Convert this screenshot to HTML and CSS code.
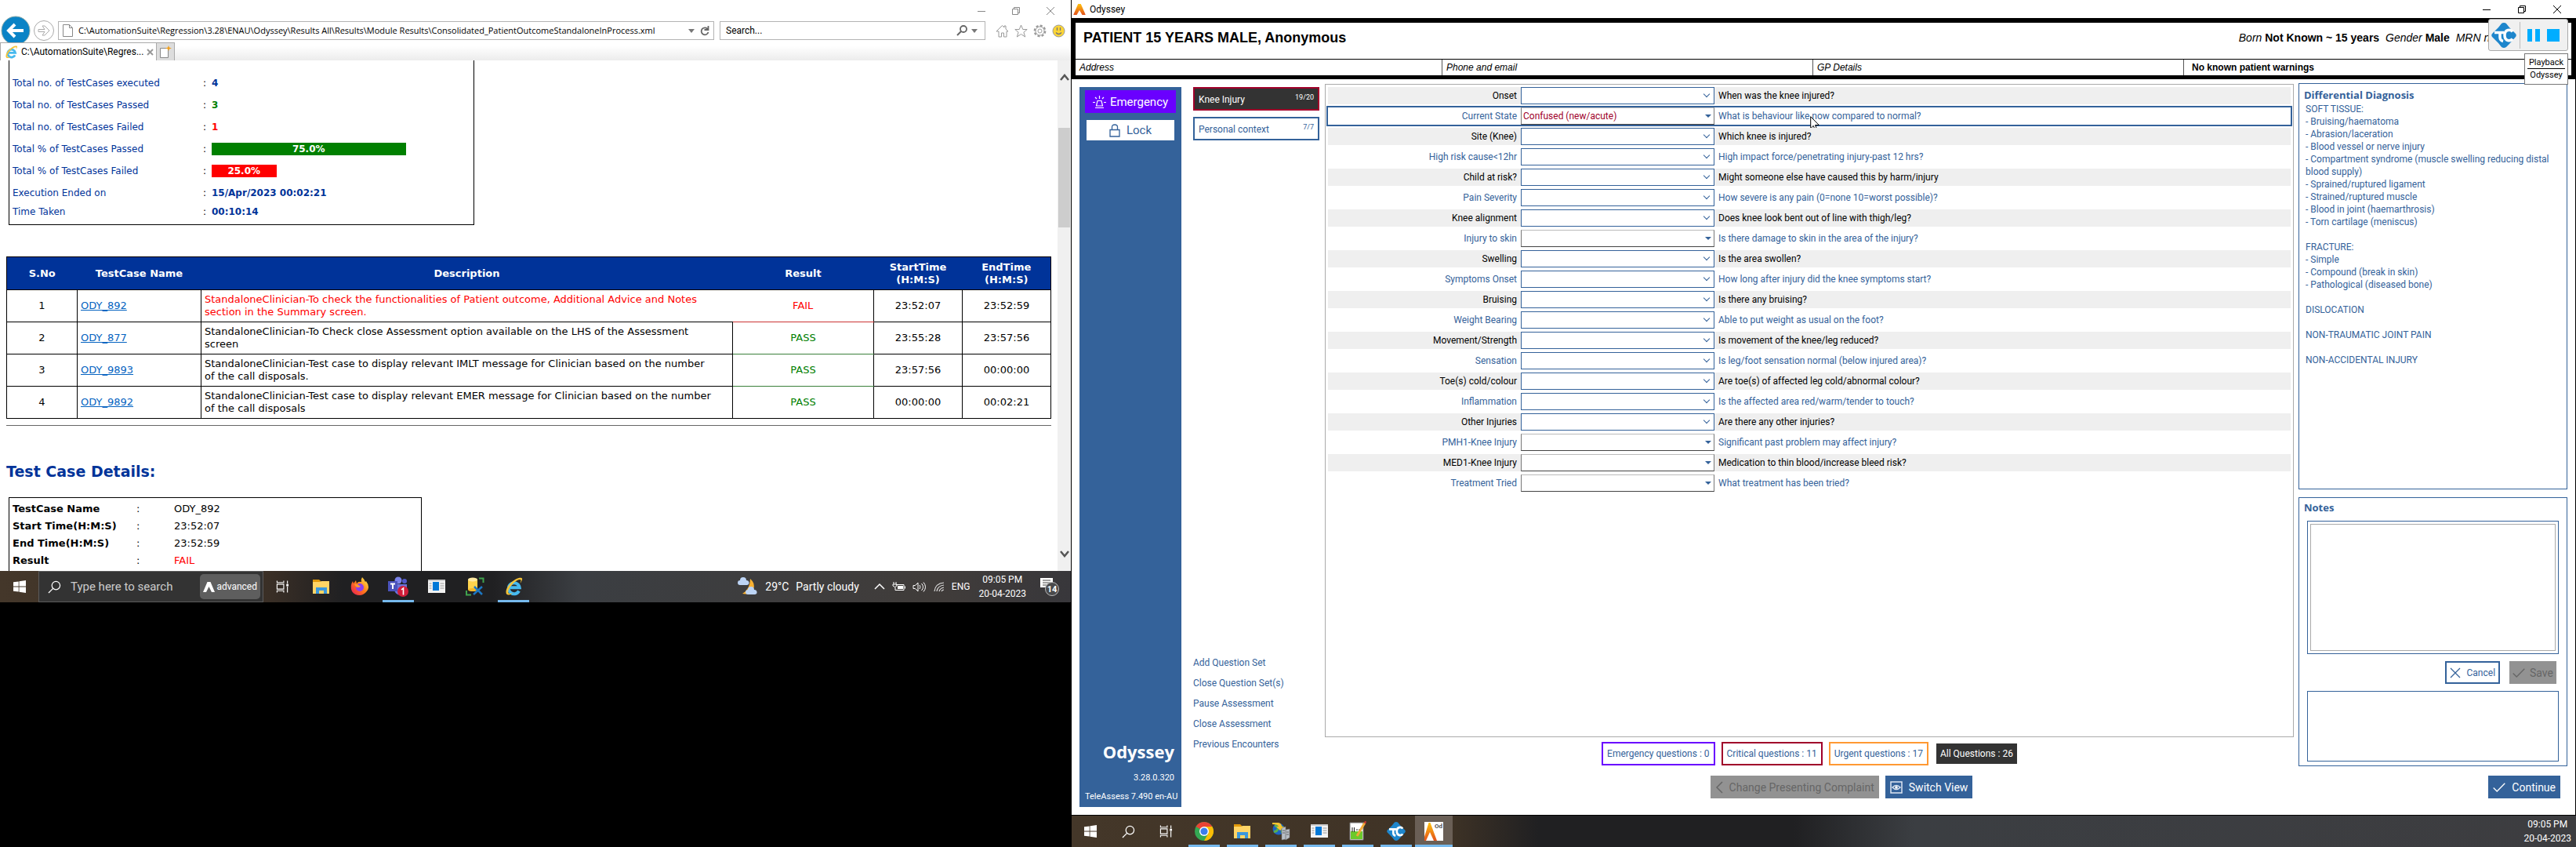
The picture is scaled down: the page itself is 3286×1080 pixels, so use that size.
FILE: index.html
```html
<!DOCTYPE html>
<html lang="en">
<head>
<meta charset="utf-8">
<title>Odyssey</title>
<link rel="stylesheet" href="styles.css">
</head>
<body>
<svg class="defs" aria-hidden="true">
  <symbol id="i-min" viewBox="0 0 12 12"><path d="M1 6.500h10" stroke="currentColor" fill="none"/></symbol>
  <symbol id="i-restore" viewBox="0 0 12 12"><path d="M1.500 3.500h7v7h-7zM3.500 3.500v-2h7v7h-2" stroke="currentColor" fill="none"/></symbol>
  <symbol id="i-close" viewBox="0 0 12 12"><path d="M1 1l10 10M11 1L1 11" stroke="currentColor" fill="none"/></symbol>
  <symbol id="i-windows" viewBox="0 0 16 16"><path d="M0 2.300L6.700 1.400v6.200H0zM7.500 1.300L16 0v7.600H7.500zM0 8.400h6.700v6.200L0 13.700zM7.500 8.400H16V16l-8.500-1.300z" fill="#fff"/></symbol>
  <symbol id="i-search" viewBox="0 0 18 18"><circle cx="11" cy="7" r="5.500" fill="none" stroke="#fff" stroke-width="1.300"/><path d="M7 11L1 17" stroke="#fff" stroke-width="1.300"/></symbol>
  <symbol id="i-taskview" viewBox="0 0 18 16"><path d="M1.500 0v2.500h9V0M1.500 16v-2.500h9V16M1.500 4.700h9v6.600h-9zM15.500 0v4M15.500 8v8" fill="none" stroke="#fff" stroke-width="1.200"/><path d="M14 4.500h3v3h-3z" fill="#fff"/></symbol>
  <symbol id="i-folder" viewBox="0 0 24 20"><path d="M1 1h8l2 2v4H1z" fill="#e19a0b"/><path d="M1 4h9l2-1h10v16H1z" fill="#ffd566"/><path d="M5 19v-8h14v8h-4v-4H9v4z" fill="#3b98dc"/></symbol>
  <symbol id="i-window" viewBox="0 0 22 18"><path d="M0 0h22v17H0z" fill="#f3f3f3"/><path d="M0 0h22v2H0z" fill="#ccc"/><path d="M6 3h8v11H6z" fill="#0078d7"/><path d="M1.500 5h3M1.500 8h3M1.500 11h3M15.500 5h5M15.500 8h5M15.500 11h5" stroke="#999"/></symbol>
  <symbol id="i-tc" viewBox="0 0 32 32"><path d="M16 0q2 0 3 1l4 5 8 8q1.500 2 0 4l-8 9-4 4q-3 2-6 0l-4-5-8-8q-1.500-2 0-4l8-8 4-5q1-1 3-1z" fill="#1e86cc"/><path d="M4 12.500h12M11 12.500v6q0 4 4 5M27 11.500q-2-3-6-2-4 1-4 6.500t4 6.500q4 1 6-2" fill="none" stroke="#fff" stroke-width="3.500"/></symbol>
  <symbol id="i-a" viewBox="0 0 18 16"><linearGradient id="g-a" x1="0" y1="0" x2="0" y2="1"><stop offset="0" stop-color="#ffc20e"/><stop offset="1" stop-color="#e2501c"/></linearGradient><path d="M7 0h4l7 16h-5L9 9l-4 7H0z" fill="url(#g-a)"/></symbol>
  <symbol id="i-ie" viewBox="0 0 24 24"><path d="M18.500 17.500a7 7 0 1 1 .7-4.300H7" fill="none" stroke="#46b9ee" stroke-width="4"/><path d="M22 1C15-1 2 11 2 19c0 6 7 3 9 1-5 2-7 1-6-3C7 11 15 3 20 3q2 0 0 5 4-6 2-7z" fill="#f6c338"/></symbol>
  <symbol id="i-check" viewBox="0 0 16 12"><path d="M.7 6.500l4.500 4.500L15.300.7" fill="none" stroke="currentColor" stroke-width="1.300"/></symbol>
</svg>

<main class="desktop">
<section class="screen screen-left">
  <div class="browser">
    <div class="titlebar browser-title">
      <button aria-label="Minimize"><svg width="12" height="12"><use href="#i-min"/></svg></button>
      <button aria-label="Restore"><svg width="12" height="12"><use href="#i-restore"/></svg></button>
      <button aria-label="Close"><svg width="12" height="12"><use href="#i-close"/></svg></button>
    </div>
    <nav class="navbar">
      <button class="back" aria-label="Back"><svg width="38" height="38" viewBox="0 0 38 38"><circle cx="19" cy="19" r="18" fill="#0a83c6" stroke="#8aa" stroke-width="1"/><path d="M29 19H11M18 11l-8 8 8 8" fill="none" stroke="#fff" stroke-width="4"/></svg></button>
      <button aria-label="Forward"><svg width="28" height="28" viewBox="0 0 28 28"><circle cx="14" cy="14" r="12.500" fill="none" stroke="#aaa"/><path d="M7 12.500h8L12 8h3l6 6-6 6h-3l3-4.500H7z" fill="none" stroke="#aaa"/></svg></button>
      <div class="field address"><svg width="13" height="16" viewBox="0 0 13 16"><path d="M.5.500h8l4 4v11H.5zM8.500.500v4h4" fill="#fff" stroke="#888"/></svg><input aria-label="Address" value="C:\AutomationSuite\Regression\3.28\ENAU\Odyssey\Results All\Results\Module Results\Consolidated_PatientOutcomeStandaloneInProcess.xml"><svg width="8" height="5"><path d="M0 0h8L4 5z" fill="#777"/></svg><svg width="12" height="13" viewBox="0 0 12 13"><path d="M10 4.500A4.500 4.500 0 1 0 10.500 8M10.500 0v5h-5" fill="none" stroke="#666" stroke-width="1.800"/></svg></div>
      <div class="field search"><input aria-label="Search" value="Search..."><svg width="14" height="14" viewBox="0 0 14 14"><circle cx="9" cy="5" r="4" fill="none" stroke="#666" stroke-width="1.800"/><path d="M6 8l-5 5" stroke="#666" stroke-width="2"/></svg><svg width="8" height="5"><path d="M0 0h8L4 5z" fill="#777"/></svg></div>
      <div class="tools">
        <button aria-label="Home"><svg width="17" height="17" viewBox="0 0 17 17"><path d="M1 9L8.500 1.500 11 4V2h2v4l3 3h-2v7h-3.500v-5h-3v5H4V9z" fill="none" stroke="#999"/></svg></button>
        <button aria-label="Favorites"><svg width="17" height="17" viewBox="0 0 17 17"><path d="M8.500 1l2.300 5.500h5.400l-4.300 3.700 1.800 5.800-5.200-3.500L3.300 16l1.800-5.800L.8 6.500h5.400z" fill="none" stroke="#999"/></svg></button>
        <button aria-label="Tools"><svg width="17" height="17" viewBox="0 0 17 17"><circle cx="8.500" cy="8.500" r="6.700" fill="none" stroke="#999" stroke-width="2.400" stroke-dasharray="3 2.260"/><circle cx="8.500" cy="8.500" r="5.500" fill="#fff" stroke="#999"/><circle cx="8.500" cy="8.500" r="2.500" fill="none" stroke="#999"/></svg></button>
        <button aria-label="Feedback"><svg width="17" height="17" viewBox="0 0 17 17"><circle cx="8.500" cy="8.500" r="7.500" fill="#fcd535" stroke="#999"/><path d="M6.500 4v4M10.500 4v4M5 10.500q3.500 4 7 0" fill="none" stroke="#777" stroke-width="1.300"/></svg></button>
      </div>
    </nav>
    <div class="tabs">
      <div class="tab"><svg width="17" height="17"><use href="#i-ie"/></svg><span>C:\AutomationSuite\Regres...</span><button aria-label="Close tab"><svg width="9" height="9" viewBox="0 0 9 9"><path d="M1 1l7 7M8 1L1 8" stroke="#999" stroke-width="2"/></svg></button></div>
      <button class="newtab" aria-label="New tab"><svg width="15" height="17" viewBox="0 0 15 17"><path d="M.5 3.500h10v12H.5z" fill="#fff" stroke="#888"/><path d="M11 0l1 2.500 3 1-3 1-1 2.500-1-2.500-3-1 3-1z" fill="#f0a020"/></svg></button>
    </div>
    <div class="viewport">
      <div class="report">
        <dl class="summary">
          <div><dt>Total no. of TestCases executed</dt><dd>4</dd></div>
          <div><dt>Total no. of TestCases Passed</dt><dd class="pass">3</dd></div>
          <div><dt>Total no. of TestCases Failed</dt><dd class="fail">1</dd></div>
          <div><dt>Total % of TestCases Passed</dt><dd><span class="bar bar-pass" style="width:75%">75.0%</span></dd></div>
          <div><dt>Total % of TestCases Failed</dt><dd><span class="bar bar-fail" style="width:25%">25.0%</span></dd></div>
          <div><dt>Execution Ended on</dt><dd>15/Apr/2023 00:02:21</dd></div>
          <div class="tight"><dt>Time Taken</dt><dd>00:10:14</dd></div>
        </dl>
        <table class="cases">
          <colgroup><col class="c-no"><col class="c-name"><col><col class="c-result"><col class="c-time"><col class="c-time"></colgroup>
          <thead><tr><th>S.No</th><th>TestCase Name</th><th>Description</th><th>Result</th><th>StartTime<br>(H:M:S)</th><th>EndTime<br>(H:M:S)</th></tr></thead>
          <tbody>
            <tr class="failed"><td>1</td><td><a href="#ody892">ODY_892</a></td><td>StandaloneClinician-To check the functionalities of Patient outcome, Additional Advice and Notes<br>section in the Summary screen.</td><td>FAIL</td><td>23:52:07</td><td>23:52:59</td></tr>
            <tr><td>2</td><td><a href="#ody877">ODY_877</a></td><td>StandaloneClinician-To Check close Assessment option available on the LHS of the Assessment<br>screen</td><td>PASS</td><td>23:55:28</td><td>23:57:56</td></tr>
            <tr><td>3</td><td><a href="#ody9893">ODY_9893</a></td><td>StandaloneClinician-Test case to display relevant IMLT message for Clinician based on the number<br>of the call disposals.</td><td>PASS</td><td>23:57:56</td><td>00:00:00</td></tr>
            <tr><td>4</td><td><a href="#ody9892">ODY_9892</a></td><td>StandaloneClinician-Test case to display relevant EMER message for Clinician based on the number<br>of the call disposals</td><td>PASS</td><td>00:00:00</td><td>00:02:21</td></tr>
          </tbody>
        </table>
        <hr>
        <h2>Test Case Details:</h2>
        <dl class="details" id="ody892">
          <div><dt>TestCase Name</dt><dd>ODY_892</dd></div>
          <div><dt>Start Time(H:M:S)</dt><dd>23:52:07</dd></div>
          <div><dt>End Time(H:M:S)</dt><dd>23:52:59</dd></div>
          <div><dt>Result</dt><dd class="fail">FAIL</dd></div>
        </dl>
      </div>
      <div class="scrollbar">
        <svg width="12" height="9" viewBox="0 0 12 9"><path d="M1 8l5-6 5 6" fill="none" stroke="#555" stroke-width="2.500"/></svg>
        <div class="thumb"></div>
        <svg width="12" height="9" viewBox="0 0 12 9"><path d="M1 1l5 6 5-6" fill="none" stroke="#555" stroke-width="2.500"/></svg>
      </div>
    </div>
  </div>
  <footer class="taskbar taskbar-left">
    <button class="task" aria-label="Start"><svg width="16" height="16"><use href="#i-windows"/></svg></button>
    <div class="tasksearch"><svg width="17" height="17"><use href="#i-search"/></svg><input aria-label="Type here to search" placeholder="Type here to search"><span class="chip"><svg width="15" height="13" viewBox="0 0 15 13"><path d="M5.500 0h4L15 13h-4L7.500 6 4 13H0z" fill="#fff"/></svg>advanced</span></div>
    <button class="task" aria-label="Task view"><svg width="17" height="16"><use href="#i-taskview"/></svg></button>
    <button class="task" aria-label="File Explorer"><svg width="24" height="20"><use href="#i-folder"/></svg></button>
    <button class="task" aria-label="Firefox"><svg width="24" height="24" viewBox="0 0 24 24"><linearGradient id="g-ff" x1="1" y1="0" x2="0" y2="1"><stop offset="0" stop-color="#fff44f"/><stop offset=".5" stop-color="#ff7a1a"/><stop offset="1" stop-color="#e5135c"/></linearGradient><path d="M15 0q3 3 4 6l1-1q6 8 0 14-4 4-8 4Q5 23 2 18-1 11 3 5l1 3 3-4 1 4q2-3 6-2-1-3 1-6z" fill="url(#g-ff)"/><circle cx="12" cy="13" r="5" fill="#8a3ff0"/><path d="M5 9q4-1 8 3-4 2-6 0z" fill="#ff9a2a"/></svg></button>
    <button class="task open" aria-label="Teams"><svg width="28" height="26" viewBox="0 0 28 26"><circle cx="14" cy="5" r="4.500" fill="#7b83eb"/><circle cx="22" cy="6" r="3" fill="#5059c9"/><path d="M9 10h16v7q-1 7-8 7-7-1-8-7z" fill="#6a73da"/><path d="M1 6h12v13H1z" fill="#4b53bc"/><path d="M4 9.500h6M7 9.500V16" stroke="#fff" stroke-width="2"/><circle cx="20" cy="19" r="7" fill="#d01c38"/><path d="M18 17l2.500-2v8.500" fill="none" stroke="#fff" stroke-width="1.600"/></svg></button>
    <button class="task" aria-label="Window"><svg width="22" height="18"><use href="#i-window"/></svg></button>
    <button class="task" aria-label="Database tools"><svg width="24" height="24" viewBox="0 0 24 24"><path d="M3 3h12v13H3z" fill="#ffd34d"/><ellipse cx="9" cy="3" rx="6" ry="2.500" fill="#ffe9a0"/><ellipse cx="9" cy="16" rx="6" ry="2" fill="#f2b829"/><path d="M17 1.500h5.500V7M1 17v5.500h6" fill="none" stroke="#3fa34d" stroke-width="2"/><path d="M11 12l10 10M21 12L10 22" stroke="#1c77c3" stroke-width="2.500"/></svg></button>
    <button class="task open" aria-label="Internet Explorer"><svg width="25" height="24"><use href="#i-ie"/></svg></button>
    <div class="tray">
      <svg width="26" height="24" viewBox="0 0 26 24"><path d="M16 2q7 6 4 13-4 8-14 6 10-6 10-19z" fill="#f9b233"/><path d="M3 10a3 3 0 0 1 0-6 4 4 0 0 1 8 0 3 3 0 0 1 1 6zM13 22a3 3 0 0 1 0-6 4 4 0 0 1 8 0 3 3 0 0 1 1 6z" fill="#bcd4f5"/></svg>
      <span class="weather"><span>29°C</span><span>Partly cloudy</span></span>
      <svg width="14" height="8" viewBox="0 0 14 8"><path d="M1 7l6-6 6 6" fill="none" stroke="#fff" stroke-width="1.500"/></svg>
      <svg width="17" height="12" viewBox="0 0 17 12"><path d="M5 3.500h10v7H4V7M16.500 5.500v3M2 0v3M5 0v3M1 3h5v2q-2.500 3-5 0z" fill="none" stroke="#fff"/><path d="M7 5h7v4H7z" fill="#fff"/></svg>
      <svg width="18" height="13" viewBox="0 0 18 13"><path d="M1 4.500h2.500L7 1v11L3.500 8.500H1zM9 4q2 2.500 0 5M11.500 2q4 4.500 0 9M14 .5q5 6 0 12" fill="none" stroke="#fff"/></svg>
      <svg width="14" height="13" viewBox="0 0 14 13"><path d="M1 12Q2 2 13 1M4 12q1-7 9-8M7 12q1-4 6-5M10 12q1-2 3-2" fill="none" stroke="#ddd" stroke-width="1.200"/></svg>
      <span>ENG</span>
      <time class="clock">09:05 PM<br>20-04-2023</time>
      <svg class="notice" width="26" height="24" viewBox="0 0 26 24"><path d="M1 1h16v12H5l-4 0z" fill="#fff"/><path d="M4 4h10M4 7h10M4 10h8" stroke="#444"/><circle cx="16" cy="15" r="8.500" fill="#4a4a4c" stroke="#bbb"/><text x="16" y="19" text-anchor="middle" class="badge">14</text></svg>
    </div>
  </footer>
</section>

<section class="screen screen-right">
  <div class="titlebar app-title">
    <svg width="16" height="14" viewBox="0 0 18 16"><use href="#i-a"/></svg><span>Odyssey</span>
    <div class="controls">
      <button aria-label="Minimize"><svg width="12" height="12"><use href="#i-min"/></svg></button>
      <button aria-label="Restore"><svg width="12" height="12"><use href="#i-restore"/></svg></button>
      <button aria-label="Close"><svg width="12" height="12"><use href="#i-close"/></svg></button>
    </div>
  </div>
  <header class="patient">
    <div class="patient-top"><h1>PATIENT 15 YEARS MALE, Anonymous</h1>
      <p><i>Born</i> <b>Not Known ~ 15 years</b> <i class="gap">Gender</i> <b>Male</b> <i class="gap">MRN nu</i></p></div>
    <div class="patient-info"><i>Address</i><i>Phone and email</i><i>GP Details</i><b>No known patient warnings</b></div>
  </header>
  <div class="workspace">
    <aside class="sidebar">
      <button class="emergency"><svg width="17" height="16" viewBox="0 0 17 16"><path d="M3 15.500h11M4.500 13L6 6.500h5l1.500 6.500zM8.500 0v4M3 2l2 2M14 2l-2 2M0 8.500h3M14 8.500h3" fill="none" stroke="#fff" stroke-width="1.200"/></svg>Emergency</button>
      <button class="lock"><svg width="14" height="17" viewBox="0 0 14 17"><path d="M1 7.500h12v8.500H1zM3.500 7V4q0-3 3.500-3t3.500 3v3" fill="none" stroke="currentColor" stroke-width="1.300"/></svg>Lock</button>
      <div class="brand"><strong>Odyssey</strong><span>3.28.0.320</span><span>TeleAssess 7.490 en-AU</span></div>
    </aside>
    <nav class="sets">
      <button class="set current"><span>Knee Injury</span><small>19/20</small></button>
      <button class="set"><span>Personal context</span><small>7/7</small></button>
      <div class="setlinks"><a href="#add">Add Question Set</a><a href="#closeset">Close Question Set(s)</a><a href="#pause">Pause Assessment</a><a href="#close">Close Assessment</a><a href="#previous">Previous Encounters</a></div>
    </nav>
    <section class="center">
      <div class="questions">
        <div class="q"><label for="q1">Onset</label><span class="pick"><select id="q1"><option></option></select></span><span>When was the knee injured?</span></div>
        <div class="q active"><label for="q2">Current State</label><span class="pick filled"><select id="q2"><option>Confused (new/acute)</option></select></span><span>What is behaviour like now compared to normal?</span>
          <svg class="cursor" width="12" height="19" viewBox="0 0 12 19"><path d="M.7.700v15l3.500-3.300 2.400 5.600 2.300-1-2.400-5.500h4.800z" fill="#fff" stroke="#000"/></svg></div>
        <div class="q"><label for="q3">Site (Knee)</label><span class="pick"><select id="q3"><option></option></select></span><span>Which knee is injured?</span></div>
        <div class="q"><label for="q4">High risk cause&lt;12hr</label><span class="pick"><select id="q4"><option></option></select></span><span>High impact force/penetrating injury-past 12 hrs?</span></div>
        <div class="q"><label for="q5">Child at risk?</label><span class="pick"><select id="q5"><option></option></select></span><span>Might someone else have caused this by harm/injury</span></div>
        <div class="q"><label for="q6">Pain Severity</label><span class="pick"><select id="q6"><option></option></select></span><span>How severe is any pain (0=none 10=worst possible)?</span></div>
        <div class="q"><label for="q7">Knee alignment</label><span class="pick"><select id="q7"><option></option></select></span><span>Does knee look bent out of line with thigh/leg?</span></div>
        <div class="q"><label for="q8">Injury to skin</label><span class="pick filled"><select id="q8"><option></option></select></span><span>Is there damage to skin in the area of the injury?</span></div>
        <div class="q"><label for="q9">Swelling</label><span class="pick"><select id="q9"><option></option></select></span><span>Is the area swollen?</span></div>
        <div class="q"><label for="q10">Symptoms Onset</label><span class="pick"><select id="q10"><option></option></select></span><span>How long after injury did the knee symptoms start?</span></div>
        <div class="q"><label for="q11">Bruising</label><span class="pick"><select id="q11"><option></option></select></span><span>Is there any bruising?</span></div>
        <div class="q"><label for="q12">Weight Bearing</label><span class="pick"><select id="q12"><option></option></select></span><span>Able to put weight as usual on the foot?</span></div>
        <div class="q"><label for="q13">Movement/Strength</label><span class="pick"><select id="q13"><option></option></select></span><span>Is movement of the knee/leg reduced?</span></div>
        <div class="q"><label for="q14">Sensation</label><span class="pick"><select id="q14"><option></option></select></span><span>Is leg/foot sensation normal (below injured area)?</span></div>
        <div class="q"><label for="q15">Toe(s) cold/colour</label><span class="pick"><select id="q15"><option></option></select></span><span>Are toe(s) of affected leg cold/abnormal colour?</span></div>
        <div class="q"><label for="q16">Inflammation</label><span class="pick"><select id="q16"><option></option></select></span><span>Is the affected area red/warm/tender to touch?</span></div>
        <div class="q"><label for="q17">Other Injuries</label><span class="pick"><select id="q17"><option></option></select></span><span>Are there any other injuries?</span></div>
        <div class="q"><label for="q18">PMH1-Knee Injury</label><span class="pick filled"><select id="q18"><option></option></select></span><span>Significant past problem may affect injury?</span></div>
        <div class="q"><label for="q19">MED1-Knee Injury</label><span class="pick filled"><select id="q19"><option></option></select></span><span>Medication to thin blood/increase bleed risk?</span></div>
        <div class="q"><label for="q20">Treatment Tried</label><span class="pick filled"><select id="q20"><option></option></select></span><span>What treatment has been tried?</span></div>
      </div>
      <div class="filters">
        <button class="f-emergency">Emergency questions : 0</button>
        <button class="f-critical">Critical questions : 11</button>
        <button class="f-urgent">Urgent questions : 17</button>
        <button class="f-all">All Questions : 26</button>
      </div>
      <div class="actions">
        <button class="btn disabled" disabled><svg width="10" height="16" viewBox="0 0 10 16"><path d="M9 1L2 8l7 7" fill="none" stroke="currentColor" stroke-width="1.500"/></svg>Change Presenting Complaint</button>
        <button class="btn primary"><svg width="16" height="16" viewBox="0 0 16 16"><path d="M1 1h14v14H1zM3 8q5-5 10 0-5 5-10 0z" fill="none" stroke="#dde6f2" stroke-width="1.500"/><circle cx="8" cy="8" r="1.800" fill="#fff"/></svg>Switch View</button>
      </div>
    </section>
    <aside class="right">
      <section class="diagnosis">
        <h2>Differential Diagnosis</h2>
        <p>SOFT TISSUE:<br>- Bruising/haematoma<br>- Abrasion/laceration<br>- Blood vessel or nerve injury<br>- Compartment syndrome (muscle swelling reducing distal<br>blood supply)<br>- Sprained/ruptured ligament<br>- Strained/ruptured muscle<br>- Blood in joint (haemarthrosis)<br>- Torn cartilage (meniscus)</p>
        <p>FRACTURE:<br>- Simple<br>- Compound (break in skin)<br>- Pathological (diseased bone)</p>
        <p>DISLOCATION</p>
        <p>NON-TRAUMATIC JOINT PAIN</p>
        <p>NON-ACCIDENTAL INJURY</p>
      </section>
      <section class="notes">
        <h2><label for="note">Notes</label></h2>
        <div class="notebox"><textarea id="note"></textarea></div>
        <div class="noteactions">
          <button class="btn outline"><svg width="14" height="14" viewBox="0 0 14 14"><path d="M1 1l12 12M13 1L1 13" stroke="currentColor" stroke-width="1.300"/></svg>Cancel</button>
          <button class="btn disabled" disabled><svg width="16" height="12"><use href="#i-check"/></svg>Save</button>
        </div>
        <div class="notelist"></div>
      </section>
      <button class="btn primary continue"><svg width="16" height="12"><use href="#i-check"/></svg>Continue</button>
    </aside>
  </div>
  <footer class="taskbar taskbar-right">
    <button class="task" aria-label="Start"><svg width="16" height="16"><use href="#i-windows"/></svg></button>
    <button class="task" aria-label="Search"><svg width="17" height="17"><use href="#i-search"/></svg></button>
    <button class="task" aria-label="Task view"><svg width="17" height="16"><use href="#i-taskview"/></svg></button>
    <button class="task open" aria-label="Chrome"><svg width="24" height="24" viewBox="0 0 24 24"><circle cx="12" cy="12" r="12" fill="#34a853"/><path d="M12 12L1.600 6A12 12 0 0 1 22.400 6z" fill="#ea4335"/><path d="M12 6h10.400A12 12 0 0 1 12 24l5.200-9z" fill="#fbbc05"/><circle cx="12" cy="12" r="6" fill="#fff"/><circle cx="12" cy="12" r="4.600" fill="#3b7ded"/></svg></button>
    <button class="task open" aria-label="File Explorer"><svg width="24" height="20"><use href="#i-folder"/></svg></button>
    <button class="task open" aria-label="Server manager"><svg width="24" height="24" viewBox="0 0 24 24"><circle cx="9" cy="9" r="7.500" fill="#1d63c4"/><path d="M4 5q5 0 4 4t-5 3M11 5q5 3 2 9" fill="none" stroke="#5bb04a" stroke-width="3"/><path d="M1 1h8q4 1 4 5h3l-5 5-5-5h3q-1-3-8-3z" fill="#f5c22e"/><path d="M13 8l5-2v16l-5 1zM18 10l5-1v11l-5 3z" fill="#b8bfc6" stroke="#777" stroke-width=".5"/><path d="M14 11h3M14 14h3M19 13h3M19 16h3" stroke="#666"/></svg></button>
    <button class="task open" aria-label="Window"><svg width="22" height="18"><use href="#i-window"/></svg></button>
    <button class="task open" aria-label="Editor"><svg width="22" height="24" viewBox="0 0 22 24"><path d="M1 1h17v22H1z" fill="#fff" stroke="#777"/><path d="M2 12h15v10H2z" fill="#6cc92c"/><path d="M4 7v6M6.500 7v6M9 10h2M12 10h2" stroke="#222"/><path d="M20 1L10 18" stroke="#f0a93a" stroke-width="3"/><path d="M21.500 1l-2-1" stroke="#c33" stroke-width="3"/></svg></button>
    <button class="task open" aria-label="TestComplete"><svg width="24" height="24"><use href="#i-tc"/></svg></button>
    <button class="task open selected" aria-label="Odyssey"><svg width="24" height="24" viewBox="0 0 24 24"><path d="M0 0h24v24H0z" fill="#fff"/><path d="M5.500 1h2L16 24h-4L7 13 2 24H0V19z" fill="url(#g-a)"/><text x="13" y="8" class="od">Od</text></svg></button>
    <time class="clock">09:05 PM<br>20-04-2023</time>
  </footer>
  <div class="playback">
    <div class="player"><svg width="32" height="34" viewBox="0 0 32 32"><use href="#i-tc"/></svg><i></i><button aria-label="Pause"><svg width="16" height="16"><path d="M0 0h6v16H0zM10 0h6v16h-6z" fill="#00adff"/></svg></button><button aria-label="Stop"><svg width="16" height="16"><path d="M0 0h16v16H0z" fill="#00adff"/></svg></button></div>
    <div class="tip"><span>Playback</span><span>Odyssey</span></div>
  </div>
</section>
</main>
</body>
</html>
```
FILE: styles.css
```css
:root {
  --blue: #34629a;
  --ui: Roboto, "Noto Sans", sans-serif;
  --heading: "Open Sans", "Noto Sans", sans-serif;
  --report: "DejaVu Sans", Verdana, sans-serif;
}
* { box-sizing: border-box; }
body { margin: 0; background: #000; font: 12px/16px var(--ui); color: #000; }
button, input, select, textarea { font: inherit; color: inherit; }
button { margin: 0; padding: 0; border: 0; background: none; display: inline-flex; align-items: center; justify-content: center; white-space: nowrap; }
input { border: 0; outline: 0; padding: 0; background: none; min-width: 0; flex: 1; }
h1, h2, p, dl, dd { margin: 0; }
svg { display: block; flex: none; overflow: visible; }
.defs { position: absolute; width: 0; height: 0; }

.desktop { display: grid; grid-template-columns: 1366fr 1920fr; min-height: 100vh; }
.screen { min-width: 0; display: flex; flex-direction: column; }

/* Browser window */
.browser { background: #fff; }
.titlebar { display: flex; align-items: center; }
.browser-title { height: 24px; justify-content: flex-end; gap: 32px; padding: 4px 20px 0; color: #888; }
.navbar { height: 30px; display: flex; align-items: center; gap: 3px; padding: 0 7px 0 1px; }
.back { height: 30px; }
.field { height: 24px; border: 1px solid #b4b4b4; display: flex; align-items: center; gap: 10px; background: #fff; }
.address { flex: 1; margin-left: 1px; padding: 0 5px; gap: 7px; font: 11px/16px var(--heading); }
.search { width: 339px; margin-left: 4px; padding: 0 9px 0 7px; gap: 5px; }
.tools { display: flex; gap: 7px; margin-left: 10px; }
.tabs { position: relative; height: 23px; display: flex; background: linear-gradient(#fff 20%, #ececec); }
.tab { width: 200px; border: 1px solid #aaa; border-bottom: 0; background: #fff; display: flex; align-items: center; gap: 4px; padding: 0 6px 0 5px; }
.tab span { flex: 1; }
.newtab { width: 23px; border: 1px solid #aaa; border-left: 0; border-bottom: 0; background: #ddd; }
.viewport { display: flex; height: 651px; overflow: hidden; }
.report { flex: 1; min-width: 0; padding: 0 8px; font-family: var(--report); }
.summary { width: 594px; height: 210px; margin-left: 3px; padding: 15px 4px 0; border: 1px solid #000; border-top: 0; color: #039; }
.summary div { display: flex; align-items: center; height: 28px; }
.summary .tight { height: 20px; }
.summary dt { width: 243px; }
.summary dd { flex: 1; font-weight: bold; display: flex; max-width: 330px; }
.summary dd::before { content: ":"; width: 11px; flex: none; color: #000; font-weight: normal; }
.bar { height: 16px; flex: none; color: #fff; text-align: center; }
.bar-pass { background: green; }
.bar-fail { background: red; }
.pass { color: green; }
.fail { color: red; }
.cases { width: 100%; margin-top: 40px; border-collapse: collapse; table-layout: fixed; border: 1px solid #000; font-size: 13px; }
.cases th { height: 42px; padding: 0; background: #039; color: #fff; }
.cases td { height: 41px; padding: 0 4px; border: 1px solid #000; text-align: center; white-space: nowrap; }
.cases td:nth-child(2), .cases td:nth-child(3) { text-align: left; }
.cases td:nth-child(4) { color: green; border-bottom-color: #3a803a; }
.cases .failed td:nth-child(3), .cases .failed td:nth-child(4) { color: red; }
.cases .failed td:nth-child(3) { border-right: 0; }
.cases .failed td:nth-child(4) { border-left: 0; border-bottom-color: #c33; }
.cases tr:last-child td { border-bottom-color: #000; }
.cases a { color: #0563c1; }
.c-no { width: 90px; }
.c-name { width: 158px; }
.c-result { width: 180px; }
.c-time { width: 113px; }
.report hr { margin: 8px 0 0; border: 0; border-top: 1px solid #666; }
.report h2 { margin-top: 46px; font-size: 19px; line-height: 24px; color: #039; }
.details { width: 527px; margin: 21px 0 0 3px; padding: 3px 4px; border: 1px solid #000; font-size: 13px; }
.details div { display: flex; height: 22px; align-items: center; }
.details dt { width: 158px; font-weight: bold; }
.details dd { display: flex; }
.details dd::before { content: ":"; width: 48px; color: #000; }
.scrollbar { width: 17px; background: #f0f0f0; display: flex; flex-direction: column; align-items: center; padding: 17px 0; }
.thumb { width: 15px; height: 127px; margin: 60px 0 auto; background: #cdcdcd; }

/* Taskbars */
.taskbar { height: 40px; display: flex; align-items: stretch; color: #fff; }
.taskbar-left { background: linear-gradient(90deg, #44372a, #3a2f26 25%, #202022 32%, #202022 46%, #3b3e42 54%, #403c3a 88%, #38373b); }
.taskbar-right { height: 41px; border-top: 1px solid #000; background: linear-gradient(90deg, #443729, #3f3326 25%, #202022 31%, #202022 48%, #3b3e42 56%, #3d3d40); }
.task { width: 49px; }
.taskbar-right .task:not(.open) { width: 48px; }
.open { border-bottom: 3px solid #76b9ed; background-clip: padding-box; margin: 0 4px 0 5px; width: 40px; padding-top: 2px; }
.selected { width: 48px; margin: 0; background: #6a5f56; }
.tasksearch { width: 287px; border: 1px solid #5b5b5b; background: #333; display: flex; align-items: center; gap: 12px; padding: 0 3px 0 11px; }
.tasksearch input { font-size: 15px; color: #ccc; }
.tasksearch input::placeholder { color: #ccc; opacity: 1; }
.chip { height: 32px; border-radius: 5px; background: #5e5e5e; display: flex; align-items: center; gap: 2px; padding: 0 4px; }
.tray { margin-left: auto; display: flex; align-items: center; gap: 9px; padding-right: 4px; }
.weather { display: flex; gap: 9px; font-size: 14px; margin-right: 10px; }
.clock { line-height: 18px; text-align: center; align-self: center; }
.tray .clock { margin: 0 8px 0 2px; }
.notice { margin-right: 10px; }
.badge { font: bold 11px var(--ui); fill: #fff; }
.od { font: bold 8px var(--ui); fill: #555; }
.taskbar-right .clock { margin: 0 6px 0 auto; }

/* Odyssey window */
.screen-right { position: relative; background: #fff; border-left: 1px solid #000; min-height: 100vh; }
.app-title { height: 23px; gap: 5px; padding: 0 18px 0 2px; }
.controls { margin-left: auto; display: flex; gap: 33px; }
.patient { border: solid #000; border-width: 6px 6px 5px 5px; font: 12px/16px "Liberation Sans", Arial, sans-serif; }
.patient-top { height: 46px; display: flex; align-items: center; justify-content: space-between; padding: 0 96px 8px 10px; }
.patient-top h1 { font-size: 18px; line-height: 24px; }
.patient-top p { font-size: 14px; white-space: nowrap; }
.gap { margin-left: 4px; }
.patient-info { display: grid; grid-template-columns: 468fr 473fr 473fr 494fr; border-top: 1px solid #000; }
.patient-info > * { height: 20px; padding: 2px 5px; border-right: 1px solid #555; }
.patient-info > :last-child { padding-left: 10px; border: 0; }
.workspace { flex: 1; display: grid; grid-template-columns: 130px 161px 1fr 343px; padding: 0 10px; border-right: 1px solid #000; color: var(--blue); }
.sidebar { margin: 10px 0; background: var(--blue); color: #fff; display: flex; flex-direction: column; padding: 4px 7px 1px; font-size: 15px; }
.emergency { height: 29px; gap: 5px; background: #6a00ff; }
.lock { height: 26px; margin: 9px 2px 0; gap: 8px; background: #fff; color: var(--blue); }
.brand { margin-top: auto; text-align: right; display: flex; flex-direction: column; font-size: 11px; line-height: 24px; padding-right: 2px; white-space: nowrap; }
.brand strong { font: bold 22px/28px var(--heading); margin-bottom: 8px; }
.sets { margin: 10px 0 77px 15px; width: 161px; display: flex; flex-direction: column; gap: 8px; }
.set { height: 30px; border: 2px solid var(--blue); justify-content: space-between; padding: 0 5px; align-items: flex-start; line-height: 28px; background: #fff; }
.set small { font-size: 9px; line-height: 22px; }
.current { background: #333; color: #fff; border-color: #a0002a; }
.setlinks { margin-top: auto; display: flex; flex-direction: column; line-height: 26px; }
.setlinks a { color: inherit; text-decoration: none; }
.center { margin: 6px 6px 0 22px; display: flex; flex-direction: column; min-width: 0; }
.questions { flex: 1; border: 1px solid #aaa; padding: 3px; display: flex; flex-direction: column; gap: 4px; }
.q { position: relative; height: 22px; display: grid; grid-template-columns: 241px 247px 1fr; column-gap: 5px; align-items: center; }
.q:nth-child(odd) { background: #efefef; color: #000; }
.q label { text-align: right; }
.active { outline: 2px solid var(--blue); }
.pick { position: relative; height: 22px; }
.pick select { width: 100%; height: 22px; appearance: none; border: 1px solid var(--blue); border-radius: 0; background: #fff; padding: 0 2px; color: #a0002a; }
.pick::after { content: ""; position: absolute; right: 7px; top: 6px; width: 5px; height: 5px; border: solid var(--blue); border-width: 0 1px 1px 0; rotate: 45deg; }
.filled select { border-color: #bbb #777 #444; }
.filled::after { right: 4px; top: 9px; width: 0; height: 0; border: 4px solid transparent; border-top-color: var(--blue); border-bottom: 0; rotate: 0deg; }
.cursor { position: absolute; left: 615px; top: 11px; }
.filters { display: flex; justify-content: center; align-items: center; gap: 8px; margin: 6px 0 13px; }
.filters button { height: 30px; padding: 0 5px; border: 2px solid; background: #fff; color: var(--blue); }
.filters .f-emergency { border-color: #6a00ff; }
.filters .f-critical { border-color: #a0002a; }
.filters .f-urgent { border-color: #ff9933; }
.filters .f-all { height: 26px; margin-left: 2px; border: 0; background: #333; color: #fff; }
.actions { display: flex; justify-content: center; gap: 8px; margin-bottom: 21px; padding-left: 82px; }
.btn { height: 29px; gap: 8px; padding: 0 6px; font-size: 14px; }
.primary { background: var(--blue); color: #fff; }
.disabled { background: #929292; color: #666; }
.outline { border: 2px solid var(--blue); padding: 0 4px; font-size: 12px; }
.right { margin-top: 5px; display: flex; flex-direction: column; }
.right h2 { font: bold 13px/20px var(--heading); }
.diagnosis { flex: 1; border: 1px solid var(--blue); padding: 4px 6px 0; }
.diagnosis p { margin: 0 0 16px 2px; white-space: nowrap; }
.notes { margin-top: 10px; border: 1px solid var(--blue); padding: 2px 10px 5px; }
.notes h2 { margin: 0 -4px 7px; }
.notebox { height: 170px; border: 1px solid var(--blue); padding: 3px; }
.notebox textarea { display: block; width: 100%; height: 100%; border: 1px solid #aaa; resize: none; }
.noteactions { display: flex; justify-content: flex-end; gap: 12px; margin: 9px 3px; }
.noteactions .disabled { padding: 0 4px; gap: 6px; }
.notelist { height: 90px; border: 1px solid var(--blue); }
.continue { align-self: flex-end; margin: 12px 9px 21px 0; }

/* Playback overlay */
.playback { position: absolute; top: 24px; right: 10px; width: 102px; display: flex; flex-direction: column; align-items: flex-end; }
.player { width: 102px; height: 41px; border: 1px solid #aaa; border-radius: 3px; background: #f0f0f0; display: flex; align-items: center; gap: 9px; padding-left: 3px; }
.player i { width: 1px; height: 34px; background: #bbb; margin-left: -5px; }
.tip { width: 56px; margin-top: 3px; border: 1px solid #777; background: #fff; padding: 3px; font-size: 11px; line-height: 15px; text-align: center; height: 40px; }
.tip span { display: block; }
.tip span + span { border-top: 1px solid #000; }
```
